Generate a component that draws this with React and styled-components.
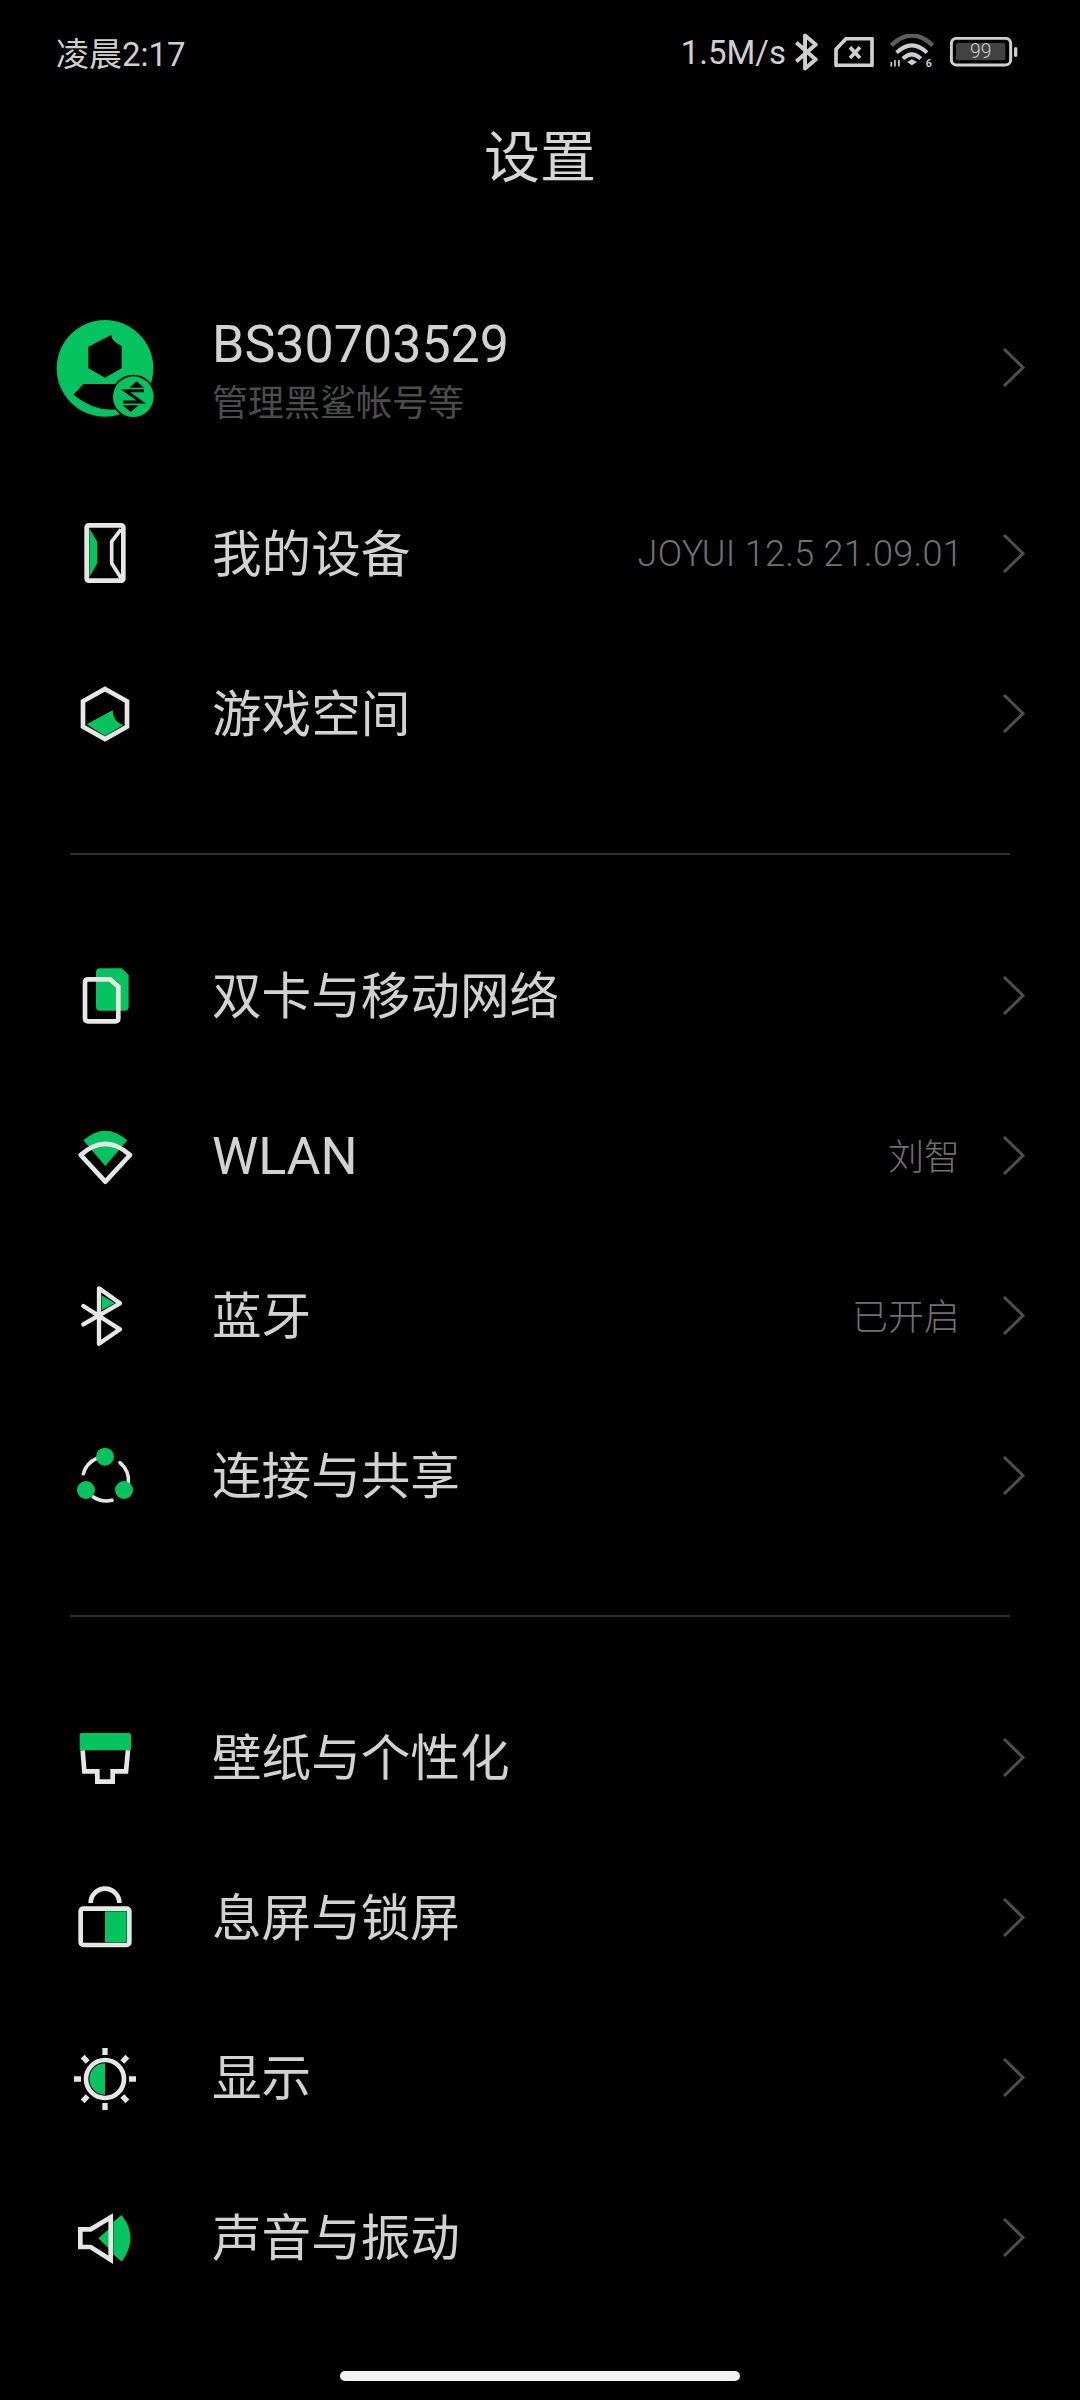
import React from 'react';
import styled, { createGlobalStyle } from 'styled-components';

const Global = createGlobalStyle`
  html, body { margin: 0; padding: 0; background: #000; }
`;

const FONT = `Roboto, "Noto Sans CJK SC", sans-serif`;
const WHITE = '#e6e6e6';
const GREEN = '#05c35f';

const Page = styled.div`
  position: relative;
  width: 1080px;
  height: 2400px;
  overflow: hidden;
  background: #000;
  font-family: ${FONT};
  color: #d9d9d9;
`;
const StatusBar = styled.div`
  box-sizing: border-box;
  height: 108px;
  padding: 0 62px 4px 56px;
  display: flex;
  align-items: center;
  justify-content: space-between;
  font-size: 33px;
  color: #cfcfcf;
`;
const StatusRight = styled.div`
  display: flex;
  align-items: center;
`;
const StatusGlyph = styled.svg`
  display: block;
  flex: none;
  margin-left: ${p => p.$gap}px;
`;
const Title = styled.h1`
  margin: 0 0 54px;
  height: 100px;
  line-height: 100px;
  text-align: center;
  font-size: 56px;
  font-weight: 400;
  color: #d6d6d6;
`;
const Row = styled.div`
  height: ${p => p.$h || 160}px;
  padding: 0 54px 0 64px;
  display: flex;
  align-items: center;
`;
const IconCell = styled.div`
  width: 80px;
  height: 80px;
  margin-right: 68px;
  flex: none;
  display: flex;
  align-items: center;
  justify-content: center;
`;
const IconSvg = styled.svg`
  width: 120px;
  height: 120px;
  flex: none;
  display: block;
`;
const Labels = styled.div`
  flex: 1;
  min-width: 0;
  padding-top: 2px;
`;
const AccountLabels = styled(Labels)`
  padding-top: 6px;
`;
const Label = styled.div`
  font-size: ${p => (p.$latin ? 52 : 49.6)}px;
  line-height: 60px;
  color: #d2d2d2;
`;
const Sub = styled.div`
  margin-top: 6px;
  font-size: 36px;
  line-height: 46px;
  color: #4c4c4c;
`;
const Value = styled.div`
  font-size: 36px;
  font-weight: 300;
  color: #707070;
  margin-right: ${p => (p.$latin ? 39 : 42)}px;
  padding-bottom: ${p => (p.$latin ? 0 : 4)}px;
  letter-spacing: ${p => (p.$latin ? 0.3 : 0)}px;
`;
const Chevron = styled.svg`
  width: 24px;
  height: 44px;
  flex: none;
  display: block;
`;
const Divider = styled.div`
  height: 2px;
  margin: 59px 70px 61px;
  background: #2e2e2e;
`;
const HomeBar = styled.div`
  position: absolute;
  left: 340px;
  bottom: 19px;
  width: 400px;
  height: 10px;
  border-radius: 5px;
  background: #f2f2f2;
`;

const Arrow = () => (
  <Chevron viewBox="0 0 24 44">
    <polyline points="2,3 21,21.5 2,40" fill="none" stroke="#4e4e4e" strokeWidth="3" />
  </Chevron>
);

const Line = { fill: 'none', stroke: WHITE, strokeWidth: 14 };

const icons = {
  avatar: (
    <IconSvg viewBox="12 24 360 360">
      <circle cx="195" cy="205" r="145" fill={GREEN} />
      <path d="M215 104 Q212 122 245 138 V205 L195 233 L145 205 V140 Z" fill="#000" />
      <path d="M130 252 H240 V326 Q170 340 100 284 Z" fill="#000" />
      <circle cx="280" cy="290" r="66" fill="#000" />
      <circle cx="280" cy="290" r="61" fill={GREEN} />
      <path d="M290 244 L312 263 H268 Z M248 316 H296 L272 336 Z" fill="#000" />
      <path d="M312 272 H256 L304 306 H250" fill="none" stroke="#000" strokeWidth="9" />
    </IconSvg>
  ),
  device: (
    <IconSvg viewBox="12 582 360 360">
      <rect x="140" y="676" width="110" height="166" rx="6" {...Line} />
      <path d="M148 685 L172 725 V790 L148 832 Z" fill={GREEN} />
      <path d="M243 688 L215 725 V790 L243 834" fill="none" stroke={WHITE} strokeWidth="11" />
    </IconSvg>
  ),
  game: (
    <IconSvg viewBox="12 1059 360 360">
      <path d="M195 1164 L261 1201 V1277 L195 1314 L129 1277 V1201 Z" {...Line} />
      <path d="M140 1270 L218 1228 Q218 1262 250 1272 L195 1305 Z" fill={GREEN} />
    </IconSvg>
  ),
  sim: (
    <IconSvg viewBox="-18 -42 360 360">
      <path d="M150 55 H215 L236 75 V170 Q236 182 224 182 H150 Q138 182 138 170 V67 Q138 55 150 55 Z" fill={GREEN} />
      <path d="M115 88 H180 L205 110 V205 Q205 214 196 214 H115 Q105 214 105 205 V97 Q105 88 115 88 Z" {...Line} />
    </IconSvg>
  ),
  wlan: (
    <IconSvg viewBox="-18 435 360 360">
      <path d="M100 568 Q166 510 232 568 L166 645 Z" fill={GREEN} />
      <path d="M92 612 Q166 545 240 612 L166 692 Z" {...Line} strokeLinejoin="round" />
    </IconSvg>
  ),
  bt: (
    <IconSvg viewBox="-18 -15 360 360">
      <path d="M155 103 L195 127 L155 147 Z" fill={GREEN} />
      <path d="M100 135 L210 205 L147 248 V82 L210 127 L100 190" fill="none" stroke={WHITE} strokeWidth="13" strokeLinejoin="round" strokeLinecap="round" />
    </IconSvg>
  ),
  share: (
    <IconSvg viewBox="-18 465 360 360">
      <g fill="none" stroke={WHITE} strokeWidth="11" strokeLinecap="round">
        <path d="M100 638 A72 72 0 0 1 140 592" />
        <path d="M210 605 A72 72 0 0 1 235 668" />
        <path d="M130 708 A72 72 0 0 0 186 718" />
      </g>
      <g fill={GREEN}>
        <circle cx="165" cy="587" r="27" />
        <circle cx="108" cy="687" r="27" />
        <circle cx="222" cy="687" r="27" />
      </g>
    </IconSvg>
  ),
  wallpaper: (
    <IconSvg viewBox="-18 -39 360 360">
      <path d="M94 66 H236 Q243 66 243 73 V118 H89 V73 Q89 66 94 66 Z" fill={GREEN} />
      <path d="M98 118 L103 181 H142 V212 H188 V181 H228 L234 118" fill="none" stroke={WHITE} strokeWidth="14" />
    </IconSvg>
  ),
  lock: (
    <IconSvg viewBox="-18 441 360 360">
      <rect x="165" y="601" width="65" height="93" fill={GREEN} />
      <rect x="92" y="593" width="146" height="109" rx="8" {...Line} />
      <path d="M122 576 A43 43 0 0 1 208 576" {...Line} />
    </IconSvg>
  ),
  display: (
    <IconSvg viewBox="-18 -12 360 360">
      <path d="M165 124 A47 47 0 0 0 165 218 Z" fill={GREEN} />
      <circle cx="165" cy="171" r="57" {...Line} />
      <g stroke={WHITE} strokeWidth="16">
        <path d="M165 78 V99 M165 243 V264 M72 171 H93 M237 171 H258" />
        <path d="M98 104 L113 120 M217 120 L232 104 M98 238 L113 222 M217 222 L232 238" />
      </g>
    </IconSvg>
  ),
  sound: (
    <IconSvg viewBox="-18 471 360 360">
      <path d="M215 582 Q268 650 215 722 L190 700 V602 Z" fill={GREEN} />
      <path d="M145 652 L176 625 V682 Z" fill={GREEN} />
      <path d="M182 589 V716 L122 678 H91 V625 H122 Z" fill="none" stroke={WHITE} strokeWidth="14" />
    </IconSvg>
  ),
};

const Item = ({ icon, label, value, latin, latinValue }) => (
  <Row>
    <IconCell>{icons[icon]}</IconCell>
    <Labels><Label $latin={latin}>{label}</Label></Labels>
    {value && <Value $latin={latinValue}>{value}</Value>}
    <Arrow />
  </Row>
);

const STATUS = '#cfcfcf';

export default function App() {
  return (
    <Page>
      <Global />
      <StatusBar>
        <div>凌晨2:17</div>
        <StatusRight>
          <div>1.5M/s</div>
          <StatusGlyph $gap={8} width="24" height="38" viewBox="398 38 74 114">
            <path d="M405 66 L465 118 L432 146 V44 L465 72 L405 124" fill="none" stroke={STATUS} strokeWidth="12" strokeLinejoin="round" />
          </StatusGlyph>
          <StatusGlyph $gap={16} width="40" height="30" viewBox="520 55 120 90">
            <path d="M556 60 H634 V140 H526 V92 Z" fill="none" stroke={STATUS} strokeWidth="11" strokeLinejoin="round" />
            <path d="M568 86 L598 118 M598 86 L568 118" fill="none" stroke={STATUS} strokeWidth="11" />
          </StatusGlyph>
          <StatusGlyph $gap={15} width="46" height="36" viewBox="683 48 139 108">
            <path d="M690 82 Q752 22 815 82" fill="none" stroke="#5e5e5e" strokeWidth="13" />
            <path d="M706 104 Q752 60 798 104" fill="none" stroke={STATUS} strokeWidth="12" />
            <path d="M725 122 Q752 96 779 122" fill="none" stroke={STATUS} strokeWidth="12" />
            <path d="M738 132 L752 124 L768 132 L752 142 Z" fill={STATUS} />
            <path d="M690 132 V146 M701 126 V146 M713 126 V146" stroke={STATUS} strokeWidth="5" />
            <text x="794" y="148" fontSize="32" fontWeight="700" fill={STATUS} fontFamily="Roboto, sans-serif">6</text>
          </StatusGlyph>
          <StatusGlyph $gap={15} width="68" height="30" viewBox="868 52 204 90">
            <rect x="872" y="56" width="178" height="80" rx="16" fill="none" stroke={STATUS} strokeWidth="9" />
            <rect x="886" y="70" width="148" height="52" rx="5" fill="#424242" />
            <rect x="1060" y="82" width="10" height="30" rx="5" fill={STATUS} />
            <text x="960" y="115" textAnchor="middle" fontSize="58" fontWeight="300" fill={STATUS} fontFamily="Roboto, sans-serif">99</text>
          </StatusGlyph>
        </StatusRight>
      </StatusBar>

      <Title>设置</Title>

      <Row $h={212}>
        <IconCell>{icons.avatar}</IconCell>
        <AccountLabels>
          <Label $latin>BS30703529</Label>
          <Sub>管理黑鲨帐号等</Sub>
        </AccountLabels>
        <Arrow />
      </Row>
      <Item icon="device" label="我的设备" value="JOYUI 12.5 21.09.01" latinValue />
      <Item icon="game" label="游戏空间" />
      <Divider />
      <Item icon="sim" label="双卡与移动网络" />
      <Item icon="wlan" label="WLAN" latin value="刘智" />
      <Item icon="bt" label="蓝牙" value="已开启" />
      <Item icon="share" label="连接与共享" />
      <Divider />
      <Item icon="wallpaper" label="壁纸与个性化" />
      <Item icon="lock" label="息屏与锁屏" />
      <Item icon="display" label="显示" />
      <Item icon="sound" label="声音与振动" />
      <HomeBar />
    </Page>
  );
}
